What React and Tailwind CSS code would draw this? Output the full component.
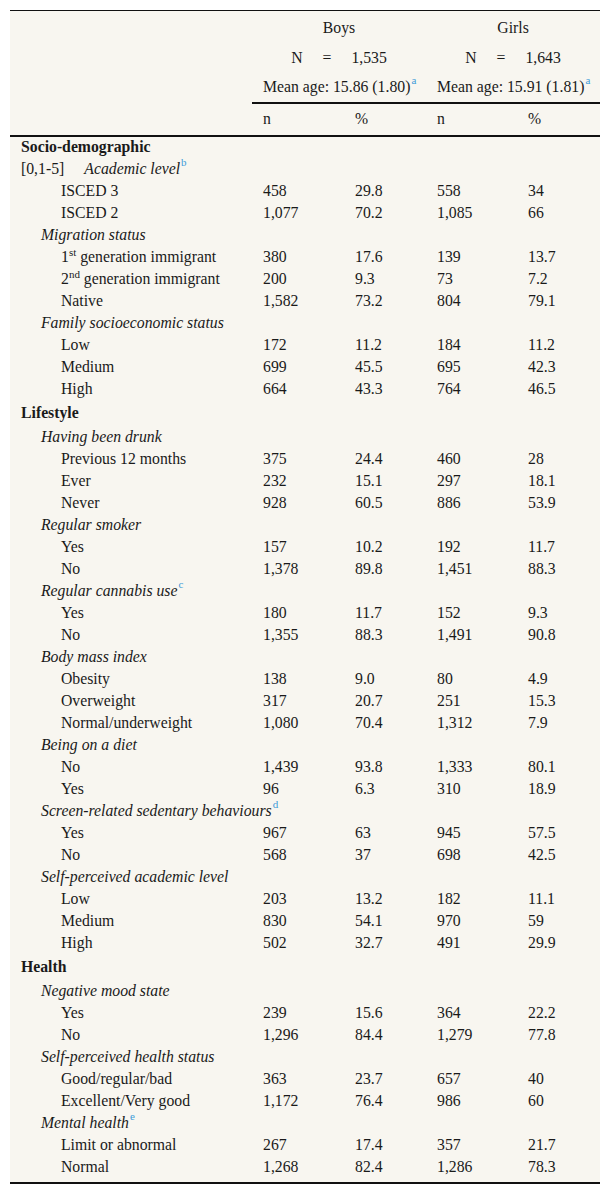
import React from "react";

const rows = [
  { t: "section", label: "Socio-demographic", first: true },
  { t: "special", label: "Academic level", sup: "b" },
  { t: "item", label: "ISCED 3", v: ["458", "29.8", "558", "34"] },
  { t: "item", label: "ISCED 2", v: ["1,077", "70.2", "1,085", "66"] },
  { t: "cat", label: "Migration status" },
  { t: "item", label: "1", ord: "st", rest: " generation immigrant", v: ["380", "17.6", "139", "13.7"] },
  { t: "item", label: "2", ord: "nd", rest: " generation immigrant", v: ["200", "9.3", "73", "7.2"] },
  { t: "item", label: "Native", v: ["1,582", "73.2", "804", "79.1"] },
  { t: "cat", label: "Family socioeconomic status" },
  { t: "item", label: "Low", v: ["172", "11.2", "184", "11.2"] },
  { t: "item", label: "Medium", v: ["699", "45.5", "695", "42.3"] },
  { t: "item", label: "High", v: ["664", "43.3", "764", "46.5"] },
  { t: "section", label: "Lifestyle" },
  { t: "cat", label: "Having been drunk" },
  { t: "item", label: "Previous 12 months", v: ["375", "24.4", "460", "28"] },
  { t: "item", label: "Ever", v: ["232", "15.1", "297", "18.1"] },
  { t: "item", label: "Never", v: ["928", "60.5", "886", "53.9"] },
  { t: "cat", label: "Regular smoker" },
  { t: "item", label: "Yes", v: ["157", "10.2", "192", "11.7"] },
  { t: "item", label: "No", v: ["1,378", "89.8", "1,451", "88.3"] },
  { t: "cat", label: "Regular cannabis use", sup: "c" },
  { t: "item", label: "Yes", v: ["180", "11.7", "152", "9.3"] },
  { t: "item", label: "No", v: ["1,355", "88.3", "1,491", "90.8"] },
  { t: "cat", label: "Body mass index" },
  { t: "item", label: "Obesity", v: ["138", "9.0", "80", "4.9"] },
  { t: "item", label: "Overweight", v: ["317", "20.7", "251", "15.3"] },
  { t: "item", label: "Normal/underweight", v: ["1,080", "70.4", "1,312", "7.9"] },
  { t: "cat", label: "Being on a diet" },
  { t: "item", label: "No", v: ["1,439", "93.8", "1,333", "80.1"] },
  { t: "item", label: "Yes", v: ["96", "6.3", "310", "18.9"] },
  { t: "cat", label: "Screen-related sedentary behaviours", sup: "d" },
  { t: "item", label: "Yes", v: ["967", "63", "945", "57.5"] },
  { t: "item", label: "No", v: ["568", "37", "698", "42.5"] },
  { t: "cat", label: "Self-perceived academic level" },
  { t: "item", label: "Low", v: ["203", "13.2", "182", "11.1"] },
  { t: "item", label: "Medium", v: ["830", "54.1", "970", "59"] },
  { t: "item", label: "High", v: ["502", "32.7", "491", "29.9"] },
  { t: "section", label: "Health" },
  { t: "cat", label: "Negative mood state" },
  { t: "item", label: "Yes", v: ["239", "15.6", "364", "22.2"] },
  { t: "item", label: "No", v: ["1,296", "84.4", "1,279", "77.8"] },
  { t: "cat", label: "Self-perceived health status" },
  { t: "item", label: "Good/regular/bad", v: ["363", "23.7", "657", "40"] },
  { t: "item", label: "Excellent/Very good", v: ["1,172", "76.4", "986", "60"] },
  { t: "cat", label: "Mental health", sup: "e" },
  { t: "item", label: "Limit or abnormal", v: ["267", "17.4", "357", "21.7"] },
  { t: "item", label: "Normal", v: ["1,268", "82.4", "1,286", "78.3"] },
];

const Note = ({ children }) => (
  <sup className="text-[11px] text-[#3d9bd9] ml-[1px] top-[-0.7em]">{children}</sup>
);

const Label = ({ row }) => {
  if (row.t === "section") {
    return <span className="font-bold">{row.label}</span>;
  }
  if (row.t === "special") {
    return (
      <span>
        [0,1-5]
        <span className="italic ml-[20px]">{row.label}</span>
        <Note>{row.sup}</Note>
      </span>
    );
  }
  if (row.t === "cat") {
    return (
      <span className="pl-[20px]">
        <span className="italic">{row.label}</span>
        {row.sup && <Note>{row.sup}</Note>}
      </span>
    );
  }
  return (
    <span className="pl-[40px]">
      {row.label}
      {row.ord && <sup className="text-[11px]">{row.ord}</sup>}
      {row.rest}
    </span>
  );
};

export default function App() {
  return (
    <div className="bg-white py-[10px] px-[10px] font-['Liberation_Serif','Times_New_Roman',serif] text-[15.75px] leading-[20px] text-[#1a1a1a]">
      <table className="w-[590px] table-fixed bg-[#f8f6f0] border-t border-b-2 border-[#111]">
        <colgroup>
          <col className="w-[242px]" />
          <col className="w-[92px]" />
          <col className="w-[82px]" />
          <col className="w-[91px]" />
          <col className="w-[83px]" />
        </colgroup>
        <thead>
          <tr className="h-[32px]">
            <th rowSpan={4} className="border-b-2 border-[#111]"></th>
            <th colSpan={2} className="font-normal text-center pt-[2px]">Boys</th>
            <th colSpan={2} className="font-normal text-center pt-[2px]">Girls</th>
          </tr>
          <tr className="h-[30px]">
            <th colSpan={2} className="font-normal">
              <span className="inline-flex gap-[20px]">
                <span>N</span>
                <span>=</span>
                <span>1,535</span>
              </span>
            </th>
            <th colSpan={2} className="font-normal">
              <span className="inline-flex gap-[20px]">
                <span>N</span>
                <span>=</span>
                <span>1,643</span>
              </span>
            </th>
          </tr>
          <tr className="h-[30px]">
            <th colSpan={2} className="font-normal whitespace-nowrap border-b-2 border-[#111] pl-[11px] text-left">
              Mean age: 15.86 (1.80)<Note>a</Note>
            </th>
            <th colSpan={2} className="font-normal whitespace-nowrap border-b-2 border-[#111] pl-[11px] text-left">
              Mean age: 15.91 (1.81)<Note>a</Note>
            </th>
          </tr>
          <tr className="h-[33px]">
            <th className="font-normal text-left pl-[11px] border-b-2 border-[#111]">n</th>
            <th className="font-normal text-left pl-[11px] border-b-2 border-[#111]">%</th>
            <th className="font-normal text-left pl-[11px] border-b-2 border-[#111]">n</th>
            <th className="font-normal text-left pl-[11px] border-b-2 border-[#111]">%</th>
          </tr>
        </thead>
        <tbody>
          {rows.map((row, i) => (
            <tr
              key={i}
              className={
                row.t === "section" && !row.first ? "h-[26px]" : "h-[22px]"
              }
            >
              <td className="pl-[11px] whitespace-nowrap">
                <Label row={row} />
              </td>
              {[0, 1, 2, 3].map((j) => (
                <td key={j} className="pl-[11px]">
                  {row.v ? row.v[j] : ""}
                </td>
              ))}
            </tr>
          ))}
          <tr className="h-[5px]">
            <td colSpan={5}></td>
          </tr>
        </tbody>
      </table>
    </div>
  );
}
